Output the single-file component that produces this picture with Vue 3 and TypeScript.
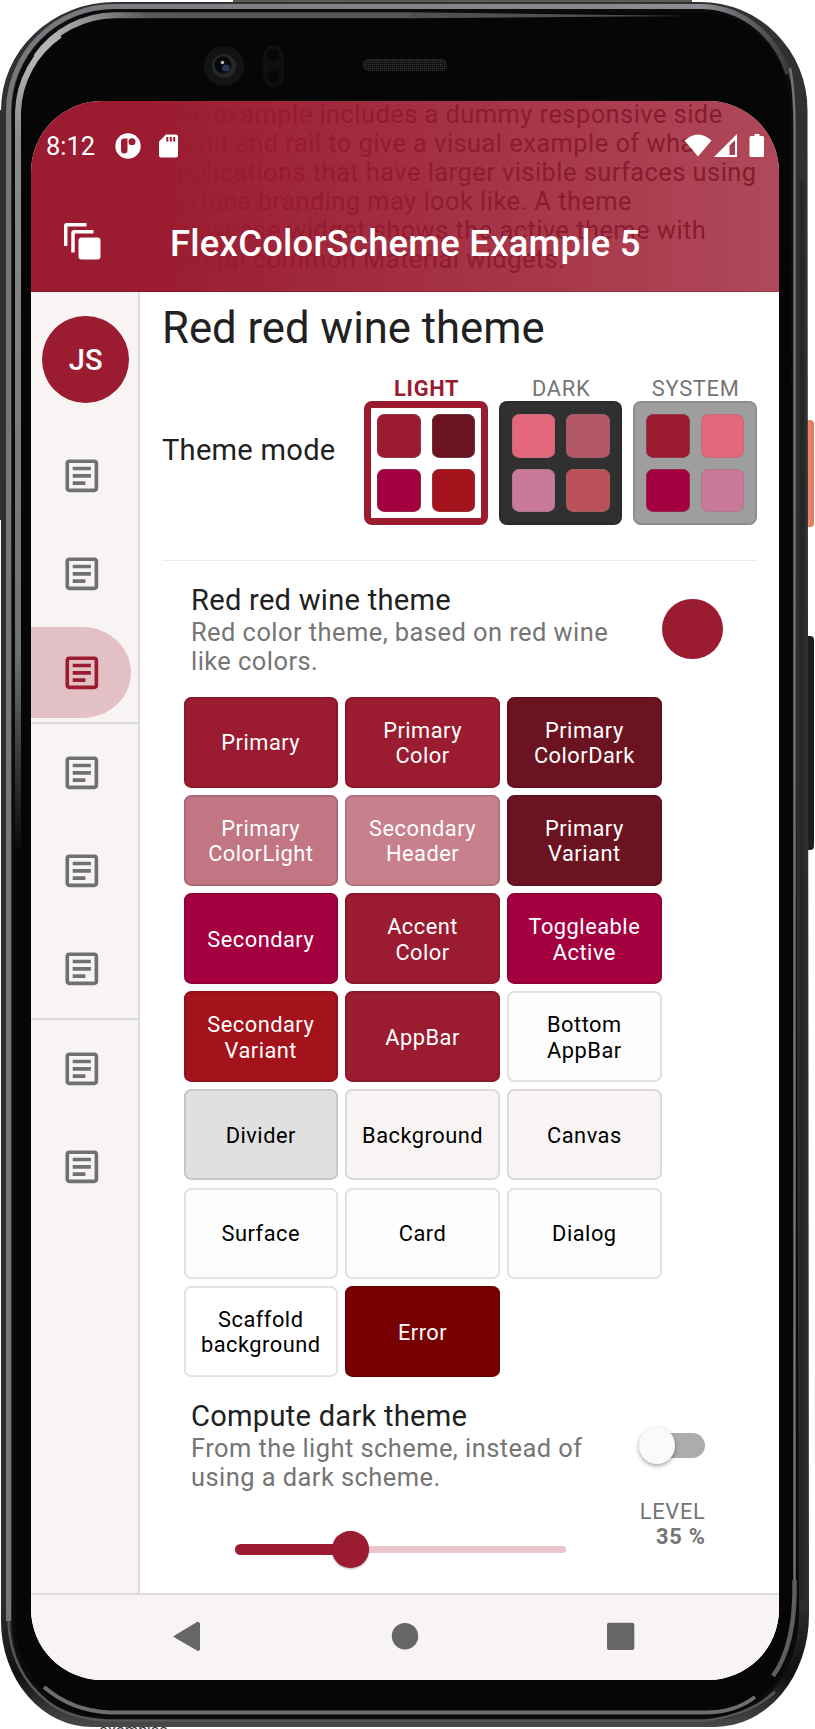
<script setup lang="ts">
interface Tile { label: string; bg: string; fg: string }
interface Mode { name: string; kind: string; colors: string[] }

const modes: Mode[] = [
  { name: 'LIGHT', kind: 'light', colors: ['#9b1b30', '#6b1320', '#a4003f', '#a4121c'] },
  { name: 'DARK', kind: 'dark', colors: ['#e4677c', '#b15767', '#c97999', '#bb5259'] },
  { name: 'SYSTEM', kind: 'system', colors: ['#9b1b30', '#e4677c', '#a4003f', '#c97999'] },
]

const tiles: Tile[] = [
  { label: 'Primary', bg: '#9b1b30', fg: '#fff' },
  { label: 'Primary\nColor', bg: '#9b1b30', fg: '#fff' },
  { label: 'Primary\nColorDark', bg: '#6b1320', fg: '#fff' },
  { label: 'Primary\nColorLight', bg: '#c27583', fg: '#fff' },
  { label: 'Secondary\nHeader', bg: '#c7808c', fg: '#fff' },
  { label: 'Primary\nVariant', bg: '#6b1320', fg: '#fff' },
  { label: 'Secondary', bg: '#a4003f', fg: '#fff' },
  { label: 'Accent\nColor', bg: '#9b1b30', fg: '#fff' },
  { label: 'Toggleable\nActive', bg: '#a4003f', fg: '#fff' },
  { label: 'Secondary\nVariant', bg: '#a4121c', fg: '#fff' },
  { label: 'AppBar', bg: '#9b1b30', fg: '#fff' },
  { label: 'Bottom\nAppBar', bg: '#fdfdfd', fg: '#000' },
  { label: 'Divider', bg: '#e0e0e0', fg: '#000' },
  { label: 'Background', bg: '#f8f4f4', fg: '#000' },
  { label: 'Canvas', bg: '#f8f4f4', fg: '#000' },
  { label: 'Surface', bg: '#fdfdfd', fg: '#000' },
  { label: 'Card', bg: '#fdfdfd', fg: '#000' },
  { label: 'Dialog', bg: '#fdfdfd', fg: '#000' },
  { label: 'Scaffold\nbackground', bg: '#ffffff', fg: '#000' },
  { label: 'Error', bg: '#790000', fg: '#fff' },
]

const railGroups: number[][] = [[1, 2, 3], [4, 5, 6], [7, 8]]
const selected = 3
const introLines = [
  'The example includes a dummy responsive side',
  'menu and rail to give a visual example of what',
  'applications that have larger visible surfaces using',
  'surface branding may look like. A theme',
  'showcase widget shows the active theme with',
  'several common Material widgets.',
]
const level = 35
</script>

<template>
  <div class="phone">
    <svg class="frame" width="815" height="1729" viewBox="0 0 815 1729" aria-hidden="true">
      <defs>
        <linearGradient id="shell" x1="0" y1="0" x2="0" y2="1">
          <stop offset="0" stop-color="#303232" />
          <stop offset=".93" stop-color="#2c2d2e" />
          <stop offset=".97" stop-color="#101011" />
          <stop offset="1" stop-color="#4a4a4a" />
        </linearGradient>
        <linearGradient id="rim" gradientUnits="userSpaceOnUse" x1="0" y1="0" x2="815" y2="0">
          <stop offset="0" stop-color="#75777d" />
          <stop offset=".86" stop-color="#8a8e92" />
          <stop offset="1" stop-color="#222" />
        </linearGradient>
        <linearGradient id="fadeDown" gradientUnits="userSpaceOnUse" x1="0" y1="60" x2="0" y2="850">
          <stop offset="0" stop-color="#b4b4b4" />
          <stop offset=".1" stop-color="#8a8a8a" />
          <stop offset=".75" stop-color="#707070" />
          <stop offset="1" stop-color="#0a0a0b" />
        </linearGradient>
        <linearGradient id="fadeRight" gradientUnits="userSpaceOnUse" x1="50" y1="0" x2="150" y2="0">
          <stop offset="0" stop-color="#b4b4b4" />
          <stop offset="1" stop-color="#575757" />
        </linearGradient>
        <linearGradient id="power" x1="0" y1="0" x2="1" y2="0">
          <stop offset="0" stop-color="#c9553c" />
          <stop offset=".4" stop-color="#ee8a70" />
          <stop offset="1" stop-color="#e57358" />
        </linearGradient>
        <pattern id="mesh" width="2" height="2" patternUnits="userSpaceOnUse">
          <rect width="2" height="2" fill="#121212" />
          <rect width="1" height="1" fill="#3a3a3a" />
        </pattern>
      </defs>
      <rect x="233" y="0" width="459" height="2" fill="#5b5c58" />
      <rect x="804" y="420" width="10" height="107" rx="4" fill="url(#power)" />
      <rect x="804" y="636" width="10" height="214" rx="4" fill="#1d1e1e" />
      <path d="M0 110H4V520H0Z" fill="#333" />
      <path d="M1 110A114 108 0 0 1 115 2H700A107 108 0 0 1 807.500 110L809 1615A94 112 0 0 1 715 1727H92A91 106 0 0 1 1 1621Z" fill="url(#shell)" />
      <path d="M14 1621V112A100 100 0 0 1 114 11H700A92 99 0 0 1 792 110L797 1615A86 103 0 0 1 711 1718H100A86 96 0 0 1 14 1621Z" fill="#060607" stroke="#0b0b0c" stroke-width="4" />
      <path d="M8.500 1621V112A105 105 0 0 1 114 6.500H700A92 99 0 0 1 788 74" fill="none" stroke="url(#rim)" stroke-width="5" />
      <path d="M18 850V112A97 97 0 0 1 60 35" fill="none" stroke="url(#fadeDown)" stroke-width="6" />
      <path d="M36 57A97 97 0 0 1 115 15.200H410" fill="none" stroke="url(#fadeRight)" stroke-width="6" />
      <path d="M410 12.200L690 16L410 18.200Z" fill="#505050" />
      <path d="M790 68Q794.500 90 794.500 130V1600" fill="none" stroke="#737373" stroke-width="2.500" />
      <path d="M794.500 1580Q796 1645 773 1676" fill="none" stroke="#5e5e5e" stroke-width="4.500" />
      <path d="M755 1697Q735 1712.500 705 1712.500H110Q72 1711 44 1687" fill="none" stroke="#6e6e6e" stroke-width="4" />
      <path d="M8.500 1621Q10 1672 48 1702Q70 1719 108 1720.500H705Q748 1716 775 1692" fill="none" stroke="#55575b" stroke-width="2.500" />
      <path d="M802 180V1600" stroke="#242628" stroke-width="5" />
      <circle cx="224" cy="66" r="20" fill="#121313" />
      <circle cx="224" cy="66" r="12" fill="#252627" />
      <circle cx="223" cy="65" r="8.500" fill="#08090d" />
      <ellipse cx="226" cy="68" rx="4" ry="3.500" fill="#2b3455" />
      <circle cx="222.500" cy="62.500" r="1.700" fill="#bbb" />
      <rect x="264" y="46" width="19" height="40" rx="9.500" fill="#0e0f0f" stroke="#151616" />
      <circle cx="273.500" cy="55.500" r="6" fill="#070707" />
      <circle cx="273.500" cy="76.500" r="6" fill="#070707" />
      <rect x="363.500" y="59.500" width="83" height="11" rx="5" fill="url(#mesh)" stroke="#222" />
    </svg>
    <span class="behind">examples</span>

    <main class="screen">
      <header class="appbar">
        <div class="intro">
          <div v-for="line in introLines" :key="line">{{ line }}</div>
        </div>
        <div class="veil"></div>
        <div class="status">
          <span class="clock">8:12</span>
          <svg class="s-app" width="26" height="26" viewBox="0 0 26 26">
            <circle cx="13" cy="13" r="12.700" fill="#fff" />
            <path d="M6 8.500Q6 5.500 9 5.500H12.500V17Q12.500 20.500 9.300 20.500Q6 20.500 6 17Z" fill="#9b1b30" />
            <circle cx="17" cy="8.700" r="3.500" fill="#9b1b30" />
          </svg>
          <svg class="s-sd" width="19" height="24" viewBox="0 0 19 24">
            <path d="M7 .5H17Q19 .5 19 2.500V21.500Q19 23.500 17 23.500H2Q0 23.500 0 21.500V7.500Z" fill="#fff" />
            <path d="M7.300 3h2v4.500h-2zM10.800 3h2v4.500h-2zM14.200 3h2v4.500h-2z" fill="#9b1b30" />
          </svg>
          <svg class="s-right" width="82" height="26" viewBox="0 0 82 26">
            <path d="M.5 7.500Q14-4.500 27.500 7.500L14 23.500Z" fill="#fff" />
            <path d="M30 24L53 1V24Z" fill="#fff" />
            <path d="M45.500 12.500L51 7V22H45.500Z" fill="#a94052" />
            <path d="M70.500 1H75.500V3H78.500Q80 3 80 4.500V22.500Q80 24 78.500 24H67Q65.500 24 65.500 22.500V4.500Q65.500 3 67 3H70.500Z" fill="#fff" />
          </svg>
        </div>
        <div class="toolbar">
          <svg class="menu" width="38" height="38" viewBox="0 0 38 38">
            <path d="M1.700 23V3Q1.700 1.700 3 1.700H22.500" fill="none" stroke="#fff" stroke-width="3.500" />
            <path d="M9 29.500V10Q9 8.700 10.300 8.700H29.500" fill="none" stroke="#fff" stroke-width="3.500" />
            <rect x="14.500" y="14.500" width="22" height="22" rx="3" fill="#fff" />
          </svg>
          <span class="apptitle">FlexColorScheme Example 5</span>
        </div>
      </header>

      <div class="body">
        <nav class="rail">
          <div class="avatar">JS</div>
          <div v-for="(group, g) in railGroups" :key="g" class="group">
            <div v-for="item in group" :key="item" class="item" :class="{ active: item === selected }">
              <svg viewBox="0 0 24 24" width="43.640" height="43.640">
                <path fill="currentColor" d="M19 5v14H5V5h14m0-2H5c-1.100 0-2 .9-2 2v14c0 1.100.9 2 2 2h14c1.100 0 2-.9 2-2V5c0-1.100-.9-2-2-2zM14 17H7v-2h7v2zm3-4H7v-2h10v2zm0-4H7V7h10v2z" />
              </svg>
            </div>
          </div>
        </nav>

        <section class="content">
          <h1>Red red wine theme</h1>
          <div class="moderow">
            <span class="modelabel">Theme mode</span>
            <div class="modes">
              <div v-for="m in modes" :key="m.name" class="mode" :class="m.kind">
                <span class="mname">{{ m.name }}</span>
                <div class="box">
                  <i v-for="(c, i) in m.colors" :key="i" :style="{ background: c }"></i>
                </div>
              </div>
            </div>
          </div>
          <hr />
          <div class="entry first">
            <div class="txt">
              <div class="t">Red red wine theme</div>
              <div class="s">Red color theme, based on red wine<br />like colors.</div>
            </div>
            <div class="dot"></div>
          </div>
          <div class="tiles">
            <div v-for="t in tiles" :key="t.label" class="tile" :style="{ background: t.bg, color: t.fg }">{{ t.label }}</div>
          </div>
          <div class="entry second">
            <div class="txt">
              <div class="t">Compute dark theme</div>
              <div class="s">From the light scheme, instead of<br />using a dark scheme.</div>
            </div>
            <div class="switch"><b></b></div>
          </div>
          <div class="levelrow">
            <div class="slider">
              <div class="on" :style="{ width: level + '%' }"></div>
              <div class="thumb" :style="{ left: level + '%' }"></div>
            </div>
            <div class="level">LEVEL<br /><strong>{{ level }} %</strong></div>
          </div>
        </section>
      </div>

      <footer class="navbar">
        <svg width="748" height="85" viewBox="0 0 748 85">
          <path d="M143.500 41L166 27.500Q168.500 26.500 168.500 29V54Q168.500 56.500 166 55L143.500 42Q142.500 41.500 143.500 41Z" fill="#666" stroke="#666" stroke-width="1" />
          <circle cx="374" cy="41.200" r="13.200" fill="#666" />
          <rect x="576" y="27.700" width="27.300" height="27.300" rx="2" fill="#666" />
        </svg>
      </footer>
    </main>
  </div>
</template>

<style>
html, body { background: #fff; }
</style>

<style scoped>
* { box-sizing: border-box; }
.phone {
  position: relative;
  width: 815px;
  height: 1729px;
  padding: 101px 36px 49px 31px;
  overflow: hidden;
  font-family: Roboto, "Noto Sans", sans-serif;
  color: #212121;
}
.frame { position: absolute; left: 0; top: 0; }
.behind {
  position: absolute;
  left: 99px;
  top: 1723px;
  font: 16px/16px "Liberation Sans", sans-serif;
  color: #333;
  clip-path: inset(4px 0 0 0);
}
.screen {
  position: relative;
  width: 748px;
  height: 1579px;
  border-radius: 71px;
  overflow: hidden;
  background: #fff;
  display: flex;
  flex-direction: column;
}
.appbar { position: relative; height: 191px; flex: none; overflow: hidden; }
.intro {
  position: absolute;
  left: 131.500px;
  top: -1.500px;
  font-size: 25.450px;
  line-height: 29.090px;
  letter-spacing: .45px;
  white-space: nowrap;
}
.veil {
  position: absolute;
  inset: 0;
  background: linear-gradient(90deg, #9b1b30 0%, #9b1b30 15%, rgba(155, 27, 48, .8) 100%);
  border-bottom: 1px solid rgba(90, 0, 20, .25);
}
.status { position: relative; height: 89px; display: flex; align-items: center; padding-left: 15px; color: #fff; }
.clock { font-size: 25.450px; width: 69px; padding-top: 1px; }
.s-app { margin-right: 18px; }
.s-right { margin-left: auto; margin-right: 13px; }
.toolbar { position: relative; height: 102px; display: flex; align-items: center; padding: 2px 0 0 33px; color: #fff; }
.apptitle { margin-left: 68px; padding-top: 2px; font-size: 36.360px; font-weight: 500; letter-spacing: .27px; white-space: nowrap; }
.body { flex: 1; display: flex; min-height: 0; }
.rail { width: 109px; background: #f8f4f4; border-right: 2px solid #dcdada; padding-top: 23.500px; }
.avatar {
  width: 87.300px;
  height: 87.300px;
  margin: 0 0 24.200px 11px;
  border-radius: 50%;
  background: #9b1b30;
  color: #fff;
  font-size: 29.090px;
  font-weight: 500;
  display: flex;
  align-items: center;
  justify-content: center;
  padding-top: 1px;
}
.group + .group { border-top: 2px solid #dcdada; }
.item { height: 98.180px; padding: 3.600px 0; color: #707070; }
.item svg { display: block; margin: 23.600px 0 0 29px; }
.item.active {
  color: #9b1b30;
  width: 100px;
  background: linear-gradient(#e3c0c6, #e3c0c6) content-box;
  border-radius: 0 49px 49px 0;
}
.item { display: flex; flex-direction: column; }
.content { flex: 1; padding: 11px 22px 0 22px; }
h1 { margin: 0; font-size: 43.640px; line-height: 51px; font-weight: 400; letter-spacing: 0; white-space: nowrap; }
.moderow { margin-top: 22px; display: flex; align-items: center; justify-content: space-between; }
.modelabel { font-size: 29.090px; line-height: 34px; letter-spacing: .27px; padding-bottom: 2px; }
.modes { display: flex; gap: 10.900px; }
.mode { width: 123.640px; text-align: center; color: #757575; }
.mname { display: block; font-size: 21.820px; line-height: 25.450px; letter-spacing: .73px; padding-left: 1px; }
.light .mname { color: #9b1b30; font-weight: 700; }
.box {
  height: 123.640px;
  border-radius: 8px;
  box-shadow: inset 0 0 0 1.800px rgba(0, 0, 0, .12);
  display: grid;
  grid-template-columns: 43.640px 43.640px;
  gap: 10.900px;
  place-content: center;
}
.box i { height: 43.640px; border-radius: 7.270px; box-shadow: inset 0 0 0 1px rgba(120, 120, 120, .3); }
.light .box { border: 7px solid #9b1b30; background: #fff; box-shadow: none; }
.dark .box { background: #303030; }
.system .box { background: #9e9e9e; }
hr { margin: 35px 0 22px; border: 0; height: 1px; background: #ebebeb; }
.entry { display: flex; justify-content: space-between; padding-left: 29px; }
.t { font-size: 29.090px; line-height: 34px; letter-spacing: .27px; white-space: nowrap; }
.s { font-size: 25.450px; line-height: 29.090px; letter-spacing: .45px; color: #757575; white-space: nowrap; padding-top: 1px; }
.dot { width: 60.600px; height: 60.600px; border-radius: 50%; background: #9b1b30; margin: 15.500px 34.500px 0 0; }
.tiles { margin: 20.500px 0 0 21.500px; display: grid; grid-template-columns: repeat(3, 154.540px); grid-auto-rows: 90.910px; gap: 7.270px; }
.tile {
  display: flex;
  align-items: center;
  justify-content: center;
  text-align: center;
  white-space: pre-line;
  font-size: 21.820px;
  line-height: 25.450px;
  letter-spacing: .5px;
  padding-top: 2px;
  border-radius: 7.270px;
  box-shadow: inset 0 0 0 1.800px rgba(0, 0, 0, .12);
}
.second { margin-top: 22px; }
.switch { width: 60px; height: 25.500px; border-radius: 13px; background: #acacac; margin: 34px 52px 0 0; position: relative; }
.switch b { position: absolute; left: -6px; top: -5.500px; width: 36.400px; height: 36.400px; border-radius: 50%; background: #fafafa; box-shadow: 0 2px 4px rgba(0, 0, 0, .35); }
.levelrow { margin-top: 7px; display: flex; justify-content: space-between; padding: 0 51.500px 0 72.500px; }
.slider { position: relative; width: 331px; height: 7.300px; border-radius: 4px; background: #e8c6cc; margin-top: 47px; }
.on { position: absolute; left: 0; top: -1.800px; height: 11px; border-radius: 5.500px; background: #9b1b30; }
.thumb { position: absolute; top: -14.500px; width: 36.400px; height: 36.400px; margin-left: -18.200px; border-radius: 50%; background: #9b1b30; box-shadow: 0 1px 2px rgba(0, 0, 0, .3); }
.level { font-size: 21.820px; line-height: 25.450px; letter-spacing: .73px; color: #757575; text-align: right; }
.navbar { height: 87px; flex: none; background: #f8f4f4; border-top: 2px solid #dcdada; }
.navbar svg { display: block; }
</style>
